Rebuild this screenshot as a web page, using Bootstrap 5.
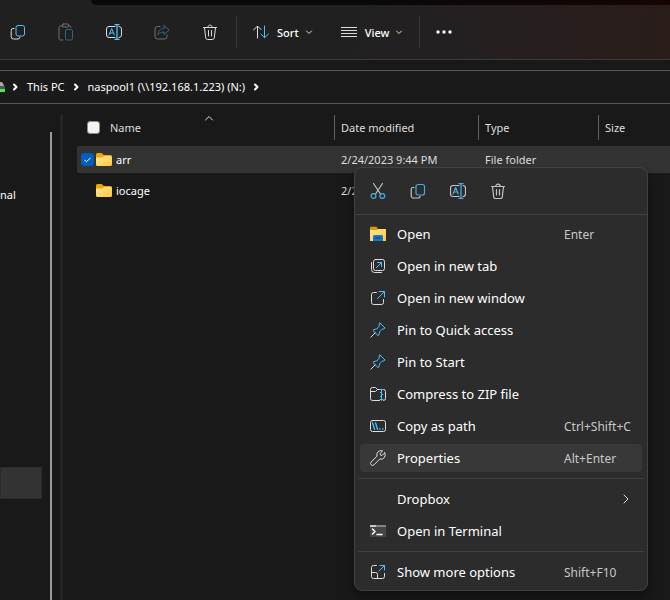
<!DOCTYPE html>
<html lang="en" data-bs-theme="dark">
<head>
<meta charset="utf-8">
<meta name="viewport" content="width=device-width, initial-scale=1">
<title>File Explorer</title>
<link href="https://cdn.jsdelivr.net/npm/bootstrap@5.3.0/dist/css/bootstrap.min.css" rel="stylesheet">
<style>
:root { --bs-body-font-family: "Noto Sans", "Open Sans", sans-serif; --blue: #4cc2ff; }
body { font-size: 11px; line-height: 16px; color: #fff; background: #191919; }
svg { display: block; flex: none; fill: none; stroke: #dedede; stroke-width: 1; stroke-linecap: round; stroke-linejoin: round; }
svg .b { stroke: var(--blue); }
.sprite { position: absolute; }
.titlebar { height: 5px; background: #202020; padding-left: 91px; }
.tab-gap { border-bottom-left-radius: 5px; background: linear-gradient(90deg, #080909 45%, #160503); }
.toolbar { height: 55px; border-bottom: 1px solid #3d3b3b; background: linear-gradient(100deg, #202020 45%, #242021 68%, #2a1d1a); }
.tool-set { gap: 12px; }
.tool { height: 36px; color: #fff; background: none; border: 0; padding: 0; font-size: 11px; font-weight: 500; line-height: 16px; }
.tool-icon { width: 36px; }
.tool span { margin: 2px 6px 0 8px; }
.tool:disabled { opacity: .42; }
.tool-rule { width: 1px; height: 32px; background: #383838; }
.address { margin-top: 10px; height: 34px; border-top: 1px solid #555857; border-bottom: 1px solid #555857; background: #1a1a1a; }
.address a { color: #fff; text-decoration: none; }
.address svg { stroke: #fff; stroke-width: 2; }
.sidebar { width: 63px; border-right: 3px solid #262626; margin-top: 11px; }
.side-links { width: 42px; padding-top: 72px; }
.side-links a { color: #fff; text-decoration: none; }
.side-active { margin-top: 264px; height: 32px; background: #333; border: 1px solid #2b2b2b; }
.scroll-thumb { width: 2px; margin: 17px 8px 0 8px; background: #9a9a9a; }
.file-area { padding: 7px 0 0 14px; }
.files { table-layout: fixed; width: 100%; border-collapse: separate; border-spacing: 0 4px; }
.files th { font-weight: 400; color: #dedede; height: 27px; padding: 0; vertical-align: top; }
.files td { height: 27px; padding: 0 0 0 6px; color: #dedede; white-space: nowrap; }
.files td:first-child { padding-left: 4px; color: #fff; }
.head-cell { height: 25px; padding-left: 6px; border-right: 1px solid #636363; }
th:last-child .head-cell { border-right: 0; }
.head-name { padding-left: 10px; gap: 10px; }
.sort-mark { margin-left: 53px; align-self: flex-start; }
.col-name { width: 258px; } .col-date { width: 144px; } .col-type { width: 120px; }
.row-on td { background: #333; }
.row-on td:first-child { border-radius: 2px 0 0 2px; }
.file-name { gap: 4px; }
.file-name .tick { margin-right: -2px; }
.tick { appearance: none; width: 13px; height: 13px; margin: 0; border-radius: 3px; background: #f3f3f3; border: 1px solid #8b8b8b; flex: none; }
.tick:checked { border-color: #005fb8; background: #005fb8 url("data:image/svg+xml,%3Csvg xmlns='http://www.w3.org/2000/svg' viewBox='0 0 11 11'%3E%3Cpath d='M2.5 5.8l2 2 4-4' fill='none' stroke='white'/%3E%3C/svg%3E"); }
.tick-off { opacity: 0; }
.ctx { position: absolute; left: 354px; top: 167px; width: 294px; padding-bottom: 4px; background: #2c2c2c; border: 1px solid #424242; border-radius: 8px; box-shadow: 0 6px 12px #0006; }
.ctx-bar { height: 46px; padding-left: 7px; gap: 8px; }
.ctx-bar button { width: 32px; height: 32px; }
.ctx-bar svg { opacity: .85; stroke-width: 1.2; }
.ctx button { color: #fff; background: none; border: 0; padding: 0; }
.ctx-rule { height: 1px; background: #404040; }
.ctx-rule-in { margin: 6px 3px; }
.ctx-group { padding: 0 5px; gap: 4px; }
.ctx-first { margin-top: 5px; }
.ctx .ctx-item { height: 28px; padding: 0 10px; border-radius: 4px; font-size: 13px; line-height: 20px; text-align: left; }
.ctx-item > svg, .ctx-blank { width: 16px; height: 16px; margin-right: 11px; }
.ctx .ctx-hot { background: #383838; }
.ctx kbd { width: 68px; padding: 1px 0 0; margin-left: auto; background: none; color: #c8c8c8; font: 12px/16px var(--bs-body-font-family); white-space: nowrap; }
</style>
<script src="https://cdn.jsdelivr.net/npm/bootstrap@5.3.0/dist/js/bootstrap.bundle.min.js"></script>
</head>
<body class="d-flex flex-column min-vh-100 position-relative overflow-x-hidden">
<svg class="sprite" width="0" height="0" aria-hidden="true">
<symbol id="copy" viewBox="0 0 16 16"><path d="M4 4.500H3A1.800 1.800 0 0 0 1.200 6.300v6.400a2.300 2.300 0 0 0 2.300 2.300H8a2 2 0 0 0 2-1.700"/><rect class="b" x="6" y="1.500" width="8.500" height="10.500" rx="2"/></symbol>
<symbol id="rename" viewBox="0 0 16 16"><path d="M9 2.500H3A2.500 2.500 0 0 0 .5 5v6A2.500 2.500 0 0 0 3 13.500h6M13 2.500A2.500 2.500 0 0 1 15.500 5v6a2.500 2.500 0 0 1-2.500 2.500"/><path class="b" d="M3 11l2.700-6.500L8.300 11M4 9h3.500"/><path class="b" d="M9 .5h4M9 15.500h4M11 .5v15" stroke-width="1.300"/></symbol>
<symbol id="bin" viewBox="0 0 16 16"><path d="M1.500 3.500h13M5.800 3.300C5.800.3 10.200.3 10.200 3.300M2.500 3.700l1.200 10.100a2 2 0 0 0 2 1.700h4.600a2 2 0 0 0 2-1.700l1.200-10.100M6.500 6.500v5.500M9.500 6.500v5.500"/></symbol>
<symbol id="folder" viewBox="0 0 16 16"><path d="M0 2.500A1.500 1.500 0 0 1 1.500 1h4.200l2 2H14.500A1.500 1.500 0 0 1 16 4.500V8H0z" fill="#f0a800" stroke="none"/><path d="M0 5.500h6L8 4h6.500A1.500 1.500 0 0 1 16 5.500v7A1.500 1.500 0 0 1 14.500 14h-13A1.500 1.500 0 0 1 0 12.500z" fill="url(#gold)" stroke="none"/></symbol>
<symbol id="pin" viewBox="0 0 16 16"><path d="M.8 15.200l4.400-4.400"/><path class="b" d="M10 1l5 5-1.300.8-1.700.5-2.500 2.600-.4 2.700-1.100 1L2.900 8.500l1.100-1 2.800-.5L9 4.400 9.400 2z"/></symbol>
<symbol id="down" viewBox="0 0 8 8"><path d="M1.500 3L4 5.500 6.500 3"/></symbol>
<linearGradient id="gold" x1="0" y1="0" x2="1" y2="1"><stop stop-color="#ffe69b"/><stop offset="1" stop-color="#ffc937"/></linearGradient>
</svg>
<div class="titlebar"><div class="tab-gap h-100"></div></div>
<div class="toolbar d-flex align-items-center" role="toolbar" aria-label="Commands">
  <div class="tool-set d-flex">
    <button class="tool tool-icon d-flex align-items-center justify-content-center" aria-label="Copy"><svg width="16" height="16"><use href="#copy"/></svg></button>
    <button class="tool tool-icon d-flex align-items-center justify-content-center" aria-label="Paste" disabled><svg width="16" height="18" viewBox="0 0 16 18"><path d="M5 3H2.500A1.500 1.500 0 0 0 1 4.500v11A1.500 1.500 0 0 0 2.500 17H5M10 3h1.500A1.500 1.500 0 0 1 13 4.500"/><rect x="4" y="1" width="7" height="3" rx="1.500"/><rect class="b" x="7.500" y="6.500" width="7" height="10.500" rx="1.500"/></svg></button>
    <button class="tool tool-icon d-flex align-items-center justify-content-center" aria-label="Rename"><svg width="16" height="16"><use href="#rename"/></svg></button>
    <button class="tool tool-icon d-flex align-items-center justify-content-center" aria-label="Share" disabled><svg width="16" height="16" viewBox="0 0 16 16"><path d="M6 2.500H3.500A2.500 2.500 0 0 0 1 5v7.500A2.500 2.500 0 0 0 3.500 15h7a2.500 2.500 0 0 0 2.500-2.500V11"/><path class="b" d="M10 1.500L15.300 6 10 10.500V8C7 8 5 9 3.800 11 4 7 6.500 4.300 10 4z"/></svg></button>
    <button class="tool tool-icon d-flex align-items-center justify-content-center" aria-label="Delete"><svg width="16" height="16"><use href="#bin"/></svg></button>
  </div>
  <div class="tool-rule ms-2"></div>
  <button class="tool d-flex align-items-center ms-3"><svg width="16" height="14" viewBox="0 0 16 14"><path d="M4.500 13V1.500M.5 5l4-4L8 4.500"/><path class="b" d="M11.500 1v11.500M8 9l3.500 3.700L15.500 9"/></svg><span>Sort</span><svg width="8" height="8"><use href="#down"/></svg></button>
  <button class="tool d-flex align-items-center ms-4"><svg class="ms-1" width="16" height="12" viewBox="0 0 16 12"><path d="M0 1.500h16M0 4.500h16M0 7.500h16M0 10.500h16"/></svg><span>View</span><svg width="8" height="8"><use href="#down"/></svg></button>
  <div class="tool-rule ms-3"></div>
  <button class="tool ms-3" aria-label="See more"><svg width="16" height="4" viewBox="0 0 16 4"><g fill="#fff" stroke="none"><circle cx="2" cy="2" r="1.700"/><circle cx="8" cy="2" r="1.700"/><circle cx="14" cy="2" r="1.700"/></g></svg></button>
</div>
<nav class="address d-flex align-items-center" aria-label="Address">
  <svg width="6" height="14" viewBox="0 0 6 14"><path d="M0 2h1q2 0 3 4H0z" fill="#aaa" stroke="none"/><path d="M0 6h5v3H0z" fill="#555" stroke="none"/><path d="M0 9h5v3H0z" fill="#4be36a" stroke="none"/></svg>
  <svg class="ms-1" width="9" height="8" viewBox="0 0 9 8"><path d="M4 1.500L6.500 4 4 6.500"/></svg>
  <a class="ms-2" href="#">This PC</a>
  <svg class="ms-2" width="7" height="8" viewBox="0 0 7 8"><path d="M2 1.500L4.500 4 2 6.500"/></svg>
  <a class="ms-2" href="#">naspool1 (\\192.168.1.223) (N:)</a>
  <svg class="ms-2" width="7" height="8" viewBox="0 0 7 8"><path d="M2 1.500L4.500 4 2 6.500"/></svg>
</nav>
<div class="d-flex flex-grow-1">
  <div class="sidebar d-flex flex-shrink-0">
    <div class="side-links"><a class="d-block" href="#">nal</a><div class="side-active"></div></div>
    <div class="scroll-thumb"></div>
  </div>
  <main class="file-area flex-grow-1">
    <table class="files">
      <thead><tr>
        <th class="col-name" scope="col"><div class="head-cell head-name d-flex align-items-center"><input class="tick" type="checkbox" aria-label="Select all"><span>Name</span><svg class="sort-mark" width="10" height="7" viewBox="0 0 10 7"><path d="M1.500 5L5 1.500 8.500 5"/></svg></div></th>
        <th class="col-date" scope="col"><div class="head-cell d-flex align-items-center">Date modified</div></th>
        <th class="col-type" scope="col"><div class="head-cell d-flex align-items-center">Type</div></th>
        <th scope="col"><div class="head-cell d-flex align-items-center">Size</div></th>
      </tr></thead>
      <tbody>
        <tr class="row-on"><td><div class="file-name d-flex align-items-center"><input class="tick" type="checkbox" checked aria-label="Select arr"><svg width="16" height="16"><use href="#folder"/></svg>arr</div></td><td>2/24/2023 9:44 PM</td><td>File folder</td><td></td></tr>
        <tr><td><div class="file-name d-flex align-items-center"><input class="tick tick-off" type="checkbox" aria-label="Select iocage"><svg width="16" height="16"><use href="#folder"/></svg>iocage</div></td><td>2/24/2023 9:44 PM</td><td>File folder</td><td></td></tr>
      </tbody>
    </table>
  </main>
</div>
<div class="ctx" role="menu">
  <div class="ctx-bar d-flex align-items-center">
    <button class="d-flex align-items-center justify-content-center" aria-label="Cut"><svg width="16" height="16" viewBox="0 0 16 16"><path d="M3.500.5l7 10.500M12.500.5L5.500 11"/><circle class="b" cx="3.500" cy="13" r="2.400"/><circle class="b" cx="12.300" cy="13" r="2.400"/></svg></button>
    <button class="d-flex align-items-center justify-content-center" aria-label="Copy"><svg width="16" height="16"><use href="#copy"/></svg></button>
    <button class="d-flex align-items-center justify-content-center" aria-label="Rename"><svg width="16" height="16"><use href="#rename"/></svg></button>
    <button class="d-flex align-items-center justify-content-center" aria-label="Delete"><svg width="16" height="16"><use href="#bin"/></svg></button>
  </div>
  <div class="ctx-rule"></div>
  <div class="ctx-group ctx-first d-flex flex-column">
    <button class="ctx-item d-flex align-items-center" role="menuitem"><svg viewBox="0 0 16 16"><g stroke="none"><path d="M0 1.500A1 1 0 0 1 1 .700h5.500L8 3h7v4H0z" fill="#d99a00"/><path d="M0 4h7l1.500-1H16v12H0z" fill="url(#gold)"/><path d="M3 15v-4.500A1.500 1.500 0 0 1 4.500 9h7a1.500 1.500 0 0 1 1.500 1.500V15z" fill="#1277cf"/><path d="M5 11.500h6v1H5z" fill="#083f75"/></g></svg>Open<kbd>Enter</kbd></button>
    <button class="ctx-item d-flex align-items-center" role="menuitem"><svg viewBox="0 0 16 16"><rect x="3.500" y="1.500" width="11" height="11" rx="2"/><path d="M1.500 4.500v7a3 3 0 0 0 3 3h7"/><path class="b" d="M6.300 9.700l5-5M7.500 4.500h4v4"/></svg>Open in new tab</button>
    <button class="ctx-item d-flex align-items-center" role="menuitem"><svg viewBox="0 0 16 16"><path d="M6.500 2.500h-3a2 2 0 0 0-2 2v8a2 2 0 0 0 2 2h8a2 2 0 0 0 2-2v-3"/><path class="b" d="M7.500 8.500l7-7M9 1.500h5.500V7"/></svg>Open in new window</button>
    <button class="ctx-item d-flex align-items-center" role="menuitem"><svg><use href="#pin"/></svg>Pin to Quick access</button>
    <button class="ctx-item d-flex align-items-center" role="menuitem"><svg><use href="#pin"/></svg>Pin to Start</button>
    <button class="ctx-item d-flex align-items-center" role="menuitem"><svg viewBox="0 0 16 16"><path d="M9.500 14.500h-7a2 2 0 0 1-2-2v-9a2 2 0 0 1 2-2h3l2 2h6a2 2 0 0 1 2 2v7a2 2 0 0 1-2 2M.5 5.500h5l2-2"/><path class="b" d="M10 3.500h3M11.500 3.500v11M10.300 6.500h1.200M11.500 8.500h1.300M10.300 10.500h1.200M10 13.500h3"/></svg>Compress to ZIP file</button>
    <button class="ctx-item d-flex align-items-center" role="menuitem"><svg viewBox="0 0 16 16"><rect x=".5" y="2.500" width="15" height="11" rx="2"/><path class="b" d="M2.500 4.800l2 6.500M5.500 4.800l2 6.500M9.500 11h.5M12.500 11h.5" stroke-width="1.300"/></svg>Copy as path<kbd>Ctrl+Shift+C</kbd></button>
    <button class="ctx-item ctx-hot d-flex align-items-center" role="menuitem"><svg viewBox="0 0 16 16"><path d="M14.700 2.900l-2.500 2.500-1.800-.3-.3-1.800L12.600.9A4.200 4.200 0 0 0 7 6.100L1.200 12a1.900 1.900 0 0 0 2.800 2.800L9.800 9a4.200 4.200 0 0 0 4.900-6.100z"/></svg>Properties<kbd>Alt+Enter</kbd></button>
  </div>
  <div class="ctx-rule ctx-rule-in"></div>
  <div class="ctx-group d-flex flex-column">
    <button class="ctx-item d-flex align-items-center" role="menuitem"><span class="ctx-blank"></span>Dropbox<svg class="ms-auto me-0" viewBox="0 0 16 16"><path d="M8 4l4 4-4 4"/></svg></button>
    <button class="ctx-item d-flex align-items-center" role="menuitem"><svg viewBox="0 0 16 16"><g stroke="none"><path d="M0 2h16v12H0z" fill="#454545"/><path d="M0 2h16v2H0z" fill="#858585"/><path d="M0 2h6v2H0z" fill="#c8c8c8"/></g><path d="M2.500 6l2.500 2.500L2.500 11M7 11.500h5" stroke="#fff" stroke-width="1.500"/></svg>Open in Terminal</button>
  </div>
  <div class="ctx-rule ctx-rule-in"></div>
  <div class="ctx-group d-flex flex-column">
    <button class="ctx-item d-flex align-items-center" role="menuitem"><svg viewBox="0 0 16 16"><path d="M6.500 1.500h-3a2 2 0 0 0-2 2v9a2 2 0 0 0 2 2h9a2 2 0 0 0 2-2v-3M1.500 8.500h4a2 2 0 0 1 2 2v4"/><path class="b" d="M9 7l5.500-5.500M10 1.500h4.500V6"/></svg>Show more options<kbd>Shift+F10</kbd></button>
  </div>
</div>
</body>
</html>
